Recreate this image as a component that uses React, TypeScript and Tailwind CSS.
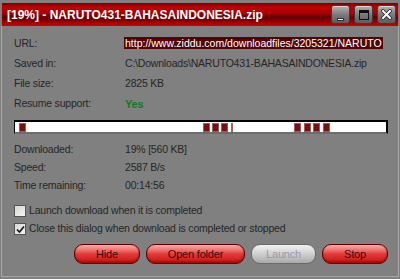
import React from "react";

const blocks = [
  { left: 4, width: 7 },
  { left: 188, width: 7 },
  { left: 197, width: 7 },
  { left: 206, width: 7 },
  { left: 216, width: 2 },
  { left: 279, width: 7 },
  { left: 289, width: 7 },
  { left: 298, width: 7 },
  { left: 308, width: 7 },
];

const TitleButton: React.FC<{ children: React.ReactNode }> = ({ children }) => (
  <div className="w-[19px] h-[19px] rounded-[3px] border border-[#3c3c3c] bg-gradient-to-b from-[#b4b4b4] via-[#7c7c7c] to-[#5c5c5c] flex items-center justify-center shadow-[inset_0_1px_0_rgba(255,255,255,0.5)]">
    {children}
  </div>
);

const RedButton: React.FC<{ label: string; width: string; disabled?: boolean }> = ({ label, width, disabled }) => (
  <button
    className={
      "h-[20px] rounded-[9px] border text-[11px] tracking-[-0.2px] leading-none flex items-center justify-center " +
      width +
      (disabled
        ? " border-[#6a6a6a] bg-gradient-to-b from-[#f2f2f2] via-[#cfcfcf] to-[#a9a9a9] text-[#9898aa]"
        : " border-[#5a0000] bg-gradient-to-b from-[#f6a9a9] via-[#e23a3a] to-[#c80a0a] text-[#3a0a0a] shadow-[inset_0_-2px_2px_rgba(120,0,0,0.4)]")
    }
  >
    {label}
  </button>
);

const Row: React.FC<{ label: string; h: string; children: React.ReactNode }> = ({ label, h, children }) => (
  <div className={"flex items-center " + h}>
    <div className="w-[111px] shrink-0">{label}</div>
    <div className="flex-1 whitespace-nowrap">{children}</div>
  </div>
);

export default function App() {
  return (
    <div className="w-[400px] h-[279px] bg-[#808080] pt-[3px] font-['Liberation_Sans',Arial,sans-serif] text-[10.5px] tracking-[-0.2px] text-[#262626] overflow-hidden">
      {/* Title bar */}
      <div className="mx-[2px] h-[23px] flex items-center justify-between pl-[5px] pr-[2px] bg-[linear-gradient(to_bottom,#7a0000_0%,#c20000_18%,#a80000_45%,#5c0000_62%,#9a0000_82%,#d40000_100%)]">
        <span className="text-white font-bold text-[12px] tracking-normal">[19%] - NARUTO431-BAHASAINDONESIA.zip</span>
        <div className="flex gap-[4px] items-center">
          <TitleButton>
            <div className="w-[7px] h-[3px] bg-white mt-[9px] border border-[#333]" />
          </TitleButton>
          <TitleButton>
            <div className="w-[10px] h-[10px] border border-[#111] border-t-[3px]" />
          </TitleButton>
          <TitleButton>
            <svg width="11" height="11" viewBox="0 0 11 11">
              <path d="M2 2 L9 9 M9 2 L2 9" stroke="#222" strokeWidth="3.6" strokeLinecap="square" />
              <path d="M2 2 L9 9 M9 2 L2 9" stroke="#fff" strokeWidth="2" strokeLinecap="square" />
            </svg>
          </TitleButton>
        </div>
      </div>

      {/* Body */}
      <div className="mx-[1px] h-[251px] border-x border-b border-[#a6a6a6] pl-[12px] pr-[10px] pt-[8px]">
        <Row label="URL:" h="h-[20px]">
          <span className="inline-block bg-[#520404] text-white tracking-normal px-[1px] leading-[12px] ml-[-1px]">
            http://www.ziddu.com/downloadfiles/3205321/NARUTO
          </span>
        </Row>
        <Row label="Saved in:" h="h-[20px]">
          C:\Downloads\NARUTO431-BAHASAINDONESIA.zip
        </Row>
        <Row label="File size:" h="h-[20px]">
          2825 KB
        </Row>
        <Row label="Resume support:" h="h-[20px]">
          <span className="font-bold text-[#0f7a1c] text-[11px]">Yes</span>
        </Row>

        {/* Progress */}
        <div className="relative mt-[6px] w-[374px] h-[14px] bg-white border-t-2 border-l border-r-2 border-black border-b-2 border-b-[#6c6c6c]">
          {blocks.map((b, i) => (
            <div
              key={i}
              className="absolute top-[1px] h-[9px] bg-[#781010] border border-[#a35a5a]"
              style={{ left: b.left, width: b.width }}
            />
          ))}
        </div>

        <div className="mt-[7px]">
          <Row label="Downloaded:" h="h-[18px]">
            19% [560 KB]
          </Row>
          <Row label="Speed:" h="h-[18px]">
            2587 B/s
          </Row>
          <Row label="Time remaining:" h="h-[18px]">
            00:14:56
          </Row>
        </div>

        <div className="mt-[7px]">
          <label className="flex items-center h-[18px] gap-[3px]">
            <span className="w-[12px] h-[12px] border border-[#555] bg-gradient-to-br from-[#d6d6d6] to-[#f4f4f4]" />
            Launch download when it is completed
          </label>
          <label className="flex items-center h-[18px] gap-[3px]">
            <span className="w-[12px] h-[12px] border border-[#555] bg-gradient-to-br from-[#d6d6d6] to-[#f4f4f4] flex items-center justify-center">
              <svg width="9" height="9" viewBox="0 0 9 9">
                <path d="M1 4.5 L3.5 7 L8 1.5" stroke="#111" strokeWidth="1.6" fill="none" />
              </svg>
            </span>
            Close this dialog when download is completed or stopped
          </label>
        </div>

        <div className="mt-[6px] flex justify-end gap-[6px]">
          <RedButton label="Hide" width="w-[66px]" />
          <RedButton label="Open folder" width="w-[99px]" />
          <RedButton label="Launch" width="w-[65px]" disabled />
          <RedButton label="Stop" width="w-[66px]" />
        </div>
      </div>
    </div>
  );
}
